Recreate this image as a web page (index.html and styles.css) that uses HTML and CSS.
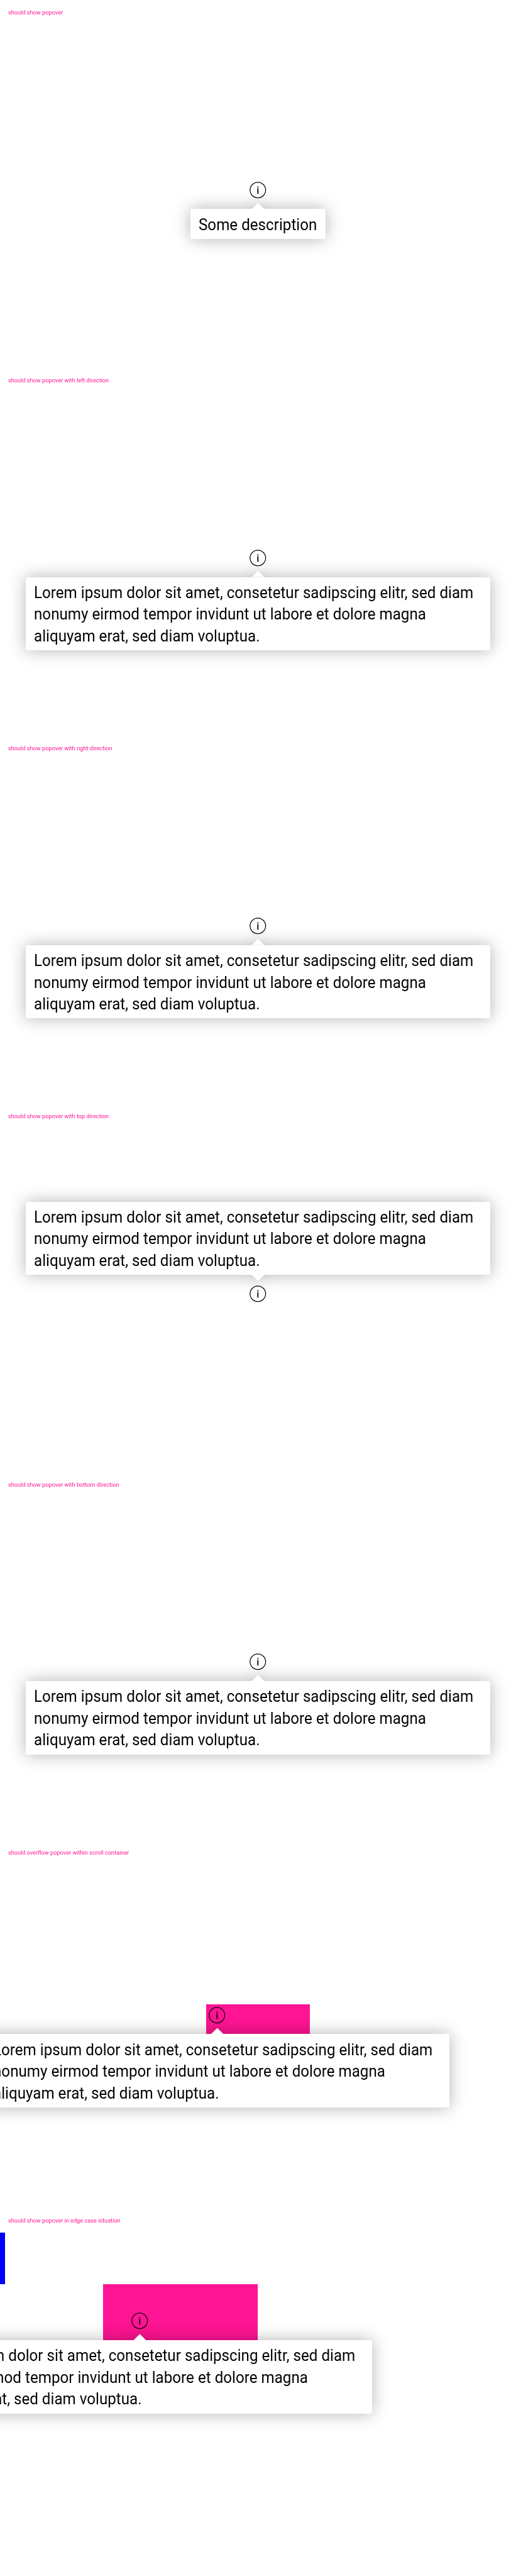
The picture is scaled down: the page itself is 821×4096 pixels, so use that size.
FILE: index.html
```html
<!DOCTYPE html>
<html lang="en">
<head>
<meta charset="utf-8">
<title>Popover</title>
<link rel="stylesheet" href="styles.css">
</head>
<body>
<svg class="defs" aria-hidden="true"><symbol id="info" viewBox="0 0 42 42"><circle cx="21" cy="21" r="15.1" fill="none" stroke="#010205" stroke-width="1.5"/><path d="M20 13.9h2.2v2.1H20zM20 17.6h2.2v10.6H20z" fill="#010205"/></symbol></svg>
<section class="case"><h2 class="label">should show popover</h2><div class="stage"><div class="trigger"><svg class="icon"><use href="#info"/></svg><div class="popover small"><p class="text">Some description</p></div></div></div></section>
<section class="case"><h2 class="label">should show popover with left direction</h2><div class="stage"><div class="trigger"><svg class="icon"><use href="#info"/></svg><div class="popover"><p class="text">Lorem ipsum dolor sit amet, consetetur sadipscing elitr, sed diam<br>nonumy eirmod tempor invidunt ut labore et dolore magna<br>aliquyam erat, sed diam voluptua.</p></div></div></div></section>
<section class="case"><h2 class="label">should show popover with right direction</h2><div class="stage"><div class="trigger"><svg class="icon"><use href="#info"/></svg><div class="popover"><p class="text">Lorem ipsum dolor sit amet, consetetur sadipscing elitr, sed diam<br>nonumy eirmod tempor invidunt ut labore et dolore magna<br>aliquyam erat, sed diam voluptua.</p></div></div></div></section>
<section class="case"><h2 class="label">should show popover with top direction</h2><div class="stage"><div class="trigger"><svg class="icon"><use href="#info"/></svg><div class="popover top"><p class="text">Lorem ipsum dolor sit amet, consetetur sadipscing elitr, sed diam<br>nonumy eirmod tempor invidunt ut labore et dolore magna<br>aliquyam erat, sed diam voluptua.</p></div></div></div></section>
<section class="case"><h2 class="label">should show popover with bottom direction</h2><div class="stage"><div class="trigger"><svg class="icon"><use href="#info"/></svg><div class="popover"><p class="text">Lorem ipsum dolor sit amet, consetetur sadipscing elitr, sed diam<br>nonumy eirmod tempor invidunt ut labore et dolore magna<br>aliquyam erat, sed diam voluptua.</p></div></div></div></section>
<section class="case"><h2 class="label">should overflow popover within scroll container</h2><div class="stage"><div class="scroller"><div class="trigger"><svg class="icon"><use href="#info"/></svg><div class="popover"><p class="text">Lorem ipsum dolor sit amet, consetetur sadipscing elitr, sed diam<br>nonumy eirmod tempor invidunt ut labore et dolore magna<br>aliquyam erat, sed diam voluptua.</p></div></div></div></div></section>
<section class="case"><h2 class="label">should show popover in edge case situation</h2><div class="stage edge"><div class="bar"></div><div class="block"><div class="trigger"><svg class="icon"><use href="#info"/></svg><div class="popover"><p class="text">Lorem ipsum dolor sit amet, consetetur sadipscing elitr, sed diam<br>nonumy eirmod tempor invidunt ut labore et dolore magna<br>aliquyam erat, sed diam voluptua.</p></div></div></div></div></section>
</body>
</html>
```
FILE: styles.css
```css
:root { --u: 0.8207px; }
* { box-sizing: border-box; }
html { overflow: hidden; background: #fff; }
body { margin: 0; font-family: Roboto, "Liberation Sans", sans-serif; color: #010205; }
.defs { position: absolute; width: 0; height: 0; }
.case { height: calc(713 * var(--u)); overflow: hidden; }
.label {
  margin: 0 0 0 calc(16 * var(--u));
  height: calc(48 * var(--u));
  padding-top: calc(15.7 * var(--u));
  font-size: calc(12 * var(--u));
  line-height: calc(18 * var(--u));
  font-weight: 400;
  color: #ff1493;
  white-space: nowrap;
  transform: scaleX(0.935);
  transform-origin: 0 0;
}
.stage { height: calc(640 * var(--u)); display: flex; align-items: center; justify-content: center; }
.trigger { position: relative; width: calc(42 * var(--u)); height: calc(42 * var(--u)); }
.icon { display: block; width: 100%; height: 100%; }
.popover {
  position: absolute;
  left: 50%;
  top: calc(58 * var(--u));
  width: calc(900 * var(--u));
  margin-left: calc(-450 * var(--u));
  padding: calc(9 * var(--u)) calc(16 * var(--u)) calc(7 * var(--u));
  background: #fff;
  border-radius: calc(4 * var(--u));
  filter: drop-shadow(0 0 calc(16 * var(--u)) rgba(0, 0, 0, 0.3));
}
.popover::before {
  content: "";
  position: absolute;
  left: 50%;
  bottom: 100%;
  width: calc(24 * var(--u));
  height: calc(12 * var(--u));
  margin-left: calc(-12 * var(--u));
  background: #fff;
  clip-path: polygon(0 100%, 50% 0, 100% 100%);
}
.small { width: calc(263 * var(--u)); margin-left: calc(-131.5 * var(--u)); }
.top { top: auto; bottom: calc(58 * var(--u)); }
.top::before { bottom: auto; top: 100%; clip-path: polygon(0 0, 100% 0, 50% 100%); }
.text {
  margin: 0;
  font-size: calc(32 * var(--u));
  line-height: calc(42 * var(--u));
  white-space: nowrap;
  transform: scaleX(0.921);
  transform-origin: 0 0;
}
.scroller { width: calc(200 * var(--u)); height: calc(100 * var(--u)); background: #ff1493; }
.edge { display: block; }
.bar { width: calc(10 * var(--u)); height: calc(100 * var(--u)); background: #00f; }
.block {
  width: calc(300 * var(--u));
  height: calc(200 * var(--u));
  margin-left: calc(200 * var(--u));
  padding: calc(50 * var(--u));
  background: #ff1493;
}
```
